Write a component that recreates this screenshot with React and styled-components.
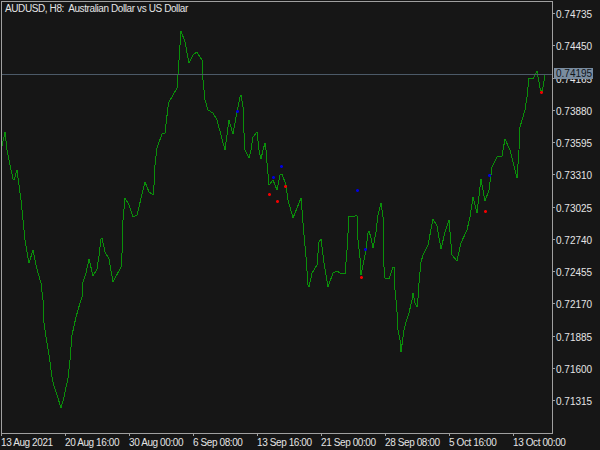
import React from 'react';
import styled, { createGlobalStyle } from 'styled-components';

const GlobalStyle = createGlobalStyle`
  html, body {
    margin: 0;
    padding: 0;
    background: #161616;
  }
`;

const Terminal = styled.div`
  width: 600px;
  height: 450px;
  overflow: hidden;
  background: #161616;
  color: #e4e4e4;
  font-family: "Liberation Sans", Arial, sans-serif;
  font-size: 10px;
  display: grid;
  grid-template-columns: 553px 47px;
  grid-template-rows: 434px 16px;
`;

const Plot = styled.div`
  position: relative;
  margin: 1px 0 0 1px;
  border: 1px solid #a0a0a0;
  overflow: hidden;
`;

const ChartTitle = styled.div`
  position: absolute;
  top: 1px;
  left: 3px;
  white-space: pre;
  line-height: 12px;
  letter-spacing: -0.4px;
`;

const PriceLine = styled.div`
  position: absolute;
  top: 72px;
  left: 0;
  right: 0;
  height: 1px;
  background: #4c5a68;
`;

const ChartSvg = styled.svg`
  display: block;
`;

const PriceAxis = styled.div`
  position: relative;
  padding-top: 8px;
`;

const PriceRow = styled.div`
  height: 32.25px;
  display: flex;
  align-items: flex-start;
  gap: 1px;
  line-height: 14px;
`;

const Tick = styled.span`
  width: 2px;
  height: 1px;
  margin-top: 5px;
  background: #a0a0a0;
`;

const CurrentPrice = styled.div`
  position: absolute;
  top: 68px;
  left: 1px;
  width: 37px;
  height: 11px;
  line-height: 12px;
  padding-left: 2px;
  background: #7a8c9f;
  color: #10161c;
`;

const TimeAxis = styled.div`
  grid-column: 1 / 3;
  display: grid;
  grid-template-columns: repeat(9, 64px);
  padding-left: 1px;
`;

const TimeCell = styled.div`
  position: relative;
  line-height: 12px;
  padding-top: 3px;
  white-space: nowrap;
  letter-spacing: -0.4px;
`;

const TimeTick = styled.span`
  position: absolute;
  top: 0;
  left: 0;
  width: 1px;
  height: 2px;
  background: #a0a0a0;
`;

const prices = ['0.74735', '0.74450', '0.74165', '0.73880', '0.73595', '0.73310', '0.73025', '0.72740', '0.72455', '0.72170', '0.71885', '0.71600', '0.71315'];

const times = ['13 Aug 2021', '20 Aug 16:00', '30 Aug 00:00', '6 Sep 08:00', '13 Sep 16:00', '21 Sep 00:00', '28 Sep 08:00', '5 Oct 16:00', '13 Oct 00:00'];

// traced from the picture, page coordinates
const line = [
  [2, 146], [5, 132], [7, 150], [10, 165], [13, 179], [14, 180], [17, 170], [19, 185], [21, 200], [23, 220], [25, 240],
  [27, 252], [29, 263], [33, 250], [36, 265], [38, 273], [41, 283], [43, 300], [44, 323], [46, 337], [49, 355], [52, 377],
  [54, 386], [57, 395], [61, 408], [64, 397], [68, 378], [70, 360], [72, 335], [76, 317], [80, 303], [82, 297], [83, 282],
  [86, 273], [89, 259], [93, 276], [97, 269], [99, 256], [101, 239], [102, 238], [105, 252], [109, 259], [113, 282],
  [121, 267], [122, 253], [123, 220], [125, 198], [129, 205], [133, 217], [137, 215], [145, 182], [149, 192], [153, 195],
  [154, 185], [155, 165], [157, 148], [162, 134], [165, 133], [168, 107], [169, 102], [177, 88], [178, 75], [181, 31],
  [185, 42], [189, 63], [193, 55], [197, 52], [200, 57], [202, 60], [203, 80], [205, 100], [208, 110], [213, 113],
  [217, 120], [221, 135], [225, 150], [227, 135], [229, 120], [233, 134], [237, 112], [240, 97], [241, 95], [243, 107],
  [244, 133], [245, 150], [249, 158], [251, 150], [253, 137], [257, 132], [259, 150], [261, 159], [263, 150], [265, 143],
  [266, 150], [267, 163], [269, 185], [273, 180], [277, 190], [280, 175], [282, 174], [286, 185], [288, 200], [293, 218],
  [301, 198], [302, 210], [304, 235], [306, 257], [308, 285], [309, 287], [312, 273], [317, 265], [319, 242], [321, 239],
  [324, 263], [328, 287], [333, 273], [337, 271], [340, 273], [345, 274], [347, 250], [349, 216], [353, 217], [357, 215],
  [358, 240], [360, 258], [361, 275], [363, 265], [366, 250], [368, 233], [369, 231], [371, 238], [373, 248], [376, 232],
  [378, 215], [381, 203], [383, 217], [383, 255], [385, 278], [389, 279], [393, 267], [394, 267], [395, 290], [396, 300],
  [397, 312], [398, 330], [400, 340], [401, 352], [404, 330], [406, 322], [409, 313], [412, 300], [413, 293], [415, 303],
  [417, 307], [418, 298], [419, 283], [421, 262], [423, 255], [428, 245], [433, 219], [437, 226], [441, 249], [445, 232],
  [449, 220], [452, 255], [457, 261], [461, 243], [467, 230], [470, 217], [473, 197], [477, 213], [481, 179], [485, 201],
  [489, 190], [492, 167], [497, 157], [502, 156], [505, 139], [510, 150], [517, 178], [519, 150], [520, 127], [525, 110],
  [527, 97], [529, 78], [533, 79], [537, 71], [540, 88], [542, 93], [545, 75],
];

const buyMarks = [[237, 111], [281, 166], [273, 177], [357, 190], [365, 249], [489, 175]];
const sellMarks = [[285, 186], [269, 194], [277, 201], [361, 277], [485, 211], [541, 92]];

const Mark = ({ x, y, color }) => (
  <g fill={color}>
    <rect x={x - 1} y={y - 1} width="3" height="3" opacity="0.55" />
    <rect x={x - 1} y={y} width="3" height="1" />
    <rect x={x} y={y - 1} width="1" height="3" />
  </g>
);

const App = () => (
  <>
    <GlobalStyle />
    <Terminal>
      <Plot>
        <ChartSvg width="550" height="431" viewBox="2 2 550 431" shapeRendering="crispEdges">
          <polyline
            points={line.map((p) => p.join(',')).join(' ')}
            fill="none"
            stroke="#0a900a"
            strokeWidth="1"
          />
          {buyMarks.map(([x, y]) => <Mark key={`b${x}`} x={x} y={y} color="#0000e0" />)}
          {sellMarks.map(([x, y]) => <Mark key={`s${x}`} x={x} y={y} color="#f00000" />)}
        </ChartSvg>
        <PriceLine />
        <ChartTitle>AUDUSD, H8:  Australian Dollar vs US Dollar</ChartTitle>
      </Plot>
      <PriceAxis>
        {prices.map((p) => (
          <PriceRow key={p}>
            <Tick />
            <span>{p}</span>
          </PriceRow>
        ))}
        <CurrentPrice>0.74195</CurrentPrice>
      </PriceAxis>
      <TimeAxis>
        {times.map((t) => (
          <TimeCell key={t}>
            <TimeTick />
            {t}
          </TimeCell>
        ))}
      </TimeAxis>
    </Terminal>
  </>
);

export default App;
